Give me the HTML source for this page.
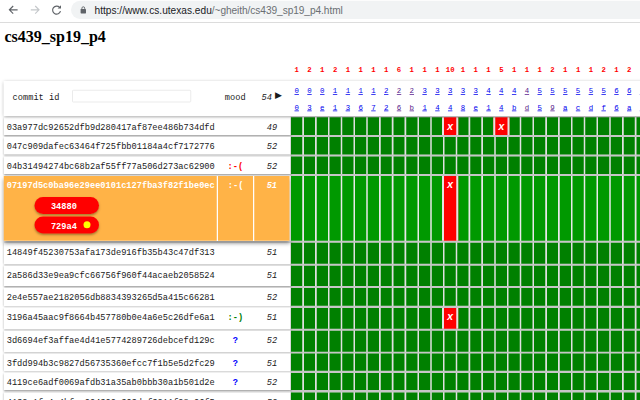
<!DOCTYPE html>
<html lang="en"><head><meta charset="utf-8"><title>cs439_sp19_p4</title>
<style>
html,body{margin:0;padding:0;background:#fff;}
body{width:640px;height:400px;overflow:hidden;position:relative;}
.s{position:absolute;left:0;top:0;width:2560px;height:1600px;transform:scale(.25);transform-origin:0 0;}
.z{position:relative;width:2560px;height:1600px;overflow:hidden;background:#fff;font-family:"Liberation Mono",monospace;font-size:34.68px;color:#1a1a1a;}

.bar{position:absolute;left:0;top:0;width:2560px;height:88px;background:#fff;border-bottom:4px solid #dcdcdc;}
.pill{position:absolute;left:284px;top:2.8px;width:2400px;height:72.8px;border-radius:36.4px;background:#f1f3f4;}
.url{position:absolute;left:378px;top:20px;font-family:"Liberation Sans",Arial,sans-serif;font-size:40.6px;line-height:44px;color:#202124;white-space:nowrap;}
.url span{color:#6b6f73;letter-spacing:-0.28px;}
.ico{position:absolute;top:0;left:0;}
h1{color:#000;position:absolute;left:18px;top:112px;margin:0;font-family:"Liberation Serif","Times New Roman",serif;font-weight:bold;font-size:64px;line-height:72px;white-space:nowrap;}
.red{position:absolute;top:264px;width:80px;margin-left:-40px;text-align:center;color:#f00;font-weight:bold;font-size:29.2px;line-height:32px;font-family:"Liberation Mono",monospace;}
.head{position:absolute;left:14.4px;top:323.6px;width:2640px;height:139.6px;background:#fff;box-shadow:0 5.2px 14px rgba(0,0,0,.42);z-index:3;}
.head .lab{position:absolute;top:45.6px;line-height:40px;}
.head input{position:absolute;left:274.4px;top:36.8px;width:475.2px;height:48.8px;box-sizing:border-box;border:2.8px solid #d6d6d6;border-radius:4px;-webkit-appearance:none;appearance:none;outline:none;padding:0;margin:0;background:#fff;}
.head a{position:absolute;width:48px;margin-left:-24px;text-align:center;font-size:29.6px;line-height:36px;color:#0000ee;text-decoration:underline;text-decoration-thickness:3px;text-underline-offset:2.8px;}
.head a.v{color:#551a8b;}
.head a.a{top:23.6px;}
.head a.b{top:89.6px;}
.row{position:absolute;left:14.8px;width:2640px;}
.row .left{position:absolute;left:0;top:0;width:1146.8px;height:100%;background:#fff;box-shadow:0 2.8px 8px rgba(0,0,0,.45);}
.row .c{position:absolute;top:0;height:100%;box-sizing:border-box;padding-top:20.4px;line-height:40px;white-space:nowrap;}
.row .id{left:0;width:854.4px;padding-left:12px;}
.row .mood{left:854.4px;width:144.8px;text-align:center;font-weight:bold;}
.row .score{left:999.2px;width:147.6px;text-align:center;font-style:italic;}
.gridbg{position:absolute;left:1162.4px;top:466px;width:1440px;height:1200px;background:#c6c6c6;}
.row .g{position:absolute;left:1147.6px;top:0;width:1440px;height:100%;background:#e0e0e0;}
.row .t{position:absolute;top:0;height:100%;width:44.8px;background:#008000;color:#fff;text-align:center;font-weight:bold;font-style:italic;font-size:41.6px;line-height:40px;box-sizing:border-box;padding-top:18.4px;}
.row .t.f{background:#ff0000;width:64.8px;margin-left:-10px;border-left:8px solid #e4e4e4;border-right:8px solid #e4e4e4;z-index:1;}
.bad{color:#f00;}
.good{color:#008000;}
.unk{color:#00f;}
.row.hl{z-index:2;}
.row.hl .left{box-shadow:0 10px 16px rgba(0,0,0,.5);width:1142.8px;}
.row.hl .c{background:#ffb347;color:#fff;font-weight:bold;}
.row.hl .id{width:852.4px;}
.row.hl .mood{left:857.6px;width:140px;}
.row.hl .score{left:1002.4px;width:140.4px;}
.row.hl .t{background:#009900;}
.row.hl .g{background:#e9e9e9;}
.row.hl .t.f{background:#ff0000;}
.pillb{position:absolute;left:122.8px;width:258.4px;height:68px;border-radius:34px;background:#f00;box-shadow:0 6px 10px rgba(0,0,0,.35);color:#fff;font-weight:bold;text-align:left;box-sizing:border-box;padding-left:66px;line-height:79.2px;font-size:34.68px;}
.dot{position:absolute;left:196.4px;top:18.4px;width:28px;height:28px;border-radius:50%;background:#ff0;}
</style></head>
<body>
<div class="s"><div class="z">
<div class="bar"><svg class="ico" style="width:280px;height:88px" viewBox="0 0 70 22" fill="none" stroke-linecap="butt" stroke-linejoin="miter"><path d="M17.6 9.8H9.6M13.2 6.0L9.4 9.8L13.2 13.6" stroke="#5f6368" stroke-width="1.15"/><path d="M30.8 9.8H38.8M35.2 6.0L39.0 9.8L35.2 13.6" stroke="#c4c7ca" stroke-width="1.15"/><path d="M59.6 7.4A4.0 4.0 0 1 0 60.5 11.2" stroke="#5f6368" stroke-width="1.15"/><path d="M61.0 5.2V8.6H57.6Z" fill="#5f6368" stroke="none"/></svg><div class="pill"></div><svg class="ico" style="left:320px;top:24px;width:28px;height:32px" viewBox="0 0 7 8"><rect x="0.6" y="3" width="5.4" height="4.4" rx="0.6" fill="#5f6368"/><path d="M1.9 3.2V2.2a1.4 1.4 0 0 1 2.8 0v1" fill="none" stroke="#5f6368" stroke-width="0.9"/></svg><div class="url">https://www.cs.utexas.edu<span>/~gheith/cs439_sp19_p4.html</span></div></div>
<h1>cs439_sp19_p4</h1>
<div class="red" style="left:1186.8px">1</div><div class="red" style="left:1237.96px">2</div><div class="red" style="left:1289.12px">1</div><div class="red" style="left:1340.28px">2</div><div class="red" style="left:1391.44px">1</div><div class="red" style="left:1442.6px">1</div><div class="red" style="left:1493.76px">1</div><div class="red" style="left:1544.92px">1</div><div class="red" style="left:1596.08px">6</div><div class="red" style="left:1647.24px">1</div><div class="red" style="left:1698.4px">1</div><div class="red" style="left:1749.56px">1</div><div class="red" style="left:1800.72px">10</div><div class="red" style="left:1851.88px">1</div><div class="red" style="left:1903.04px">1</div><div class="red" style="left:1954.2px">1</div><div class="red" style="left:2005.36px">5</div><div class="red" style="left:2056.52px">1</div><div class="red" style="left:2107.68px">1</div><div class="red" style="left:2158.84px">1</div><div class="red" style="left:2210px">2</div><div class="red" style="left:2261.16px">1</div><div class="red" style="left:2312.32px">1</div><div class="red" style="left:2363.48px">1</div><div class="red" style="left:2414.64px">2</div><div class="red" style="left:2465.8px">1</div><div class="red" style="left:2516.96px">2</div>
<div class="head"><span class="lab" style="left:36px">commit id</span><input type="text" aria-label="commit id"><span class="lab" style="left:884.8px">mood</span><span class="lab" style="left:1032px;font-style:italic">54</span><span class="lab" style="left:1086px;top:36.8px;font-family:'DejaVu Sans',sans-serif;font-size:36px">&#9654;</span><a class="a" style="left:1172.4px">0</a><a class="b" style="left:1172.4px">0</a><a class="a" style="left:1223.56px">0</a><a class="b" style="left:1223.56px">3</a><a class="a" style="left:1274.72px">0</a><a class="b" style="left:1274.72px">e</a><a class="a" style="left:1325.88px">1</a><a class="b" style="left:1325.88px">1</a><a class="a" style="left:1377.04px">1</a><a class="b" style="left:1377.04px">3</a><a class="a" style="left:1428.2px">1</a><a class="b" style="left:1428.2px">6</a><a class="a" style="left:1479.36px">1</a><a class="b" style="left:1479.36px">7</a><a class="a" style="left:1530.52px">2</a><a class="b" style="left:1530.52px">2</a><a class="a v" style="left:1581.68px">2</a><a class="b v" style="left:1581.68px">6</a><a class="a v" style="left:1632.84px">2</a><a class="b v" style="left:1632.84px">b</a><a class="a" style="left:1684px">3</a><a class="b" style="left:1684px">1</a><a class="a" style="left:1735.16px">3</a><a class="b" style="left:1735.16px">4</a><a class="a" style="left:1786.32px">3</a><a class="b" style="left:1786.32px">4</a><a class="a" style="left:1837.48px">3</a><a class="b" style="left:1837.48px">8</a><a class="a" style="left:1888.64px">3</a><a class="b" style="left:1888.64px">e</a><a class="a" style="left:1939.8px">4</a><a class="b" style="left:1939.8px">1</a><a class="a" style="left:1990.96px">4</a><a class="b" style="left:1990.96px">4</a><a class="a" style="left:2042.12px">4</a><a class="b" style="left:2042.12px">b</a><a class="a v" style="left:2093.28px">4</a><a class="b v" style="left:2093.28px">d</a><a class="a" style="left:2144.44px">5</a><a class="b" style="left:2144.44px">5</a><a class="a" style="left:2195.6px">5</a><a class="b v" style="left:2195.6px">9</a><a class="a" style="left:2246.76px">5</a><a class="b" style="left:2246.76px">a</a><a class="a" style="left:2297.92px">5</a><a class="b" style="left:2297.92px">c</a><a class="a" style="left:2349.08px">5</a><a class="b" style="left:2349.08px">d</a><a class="a" style="left:2400.24px">5</a><a class="b" style="left:2400.24px">f</a><a class="a" style="left:2451.4px">6</a><a class="b" style="left:2451.4px">6</a><a class="a" style="left:2502.56px">6</a><a class="b" style="left:2502.56px">a</a><a class="a" style="left:2553.72px">6</a><a class="b" style="left:2553.72px">7</a></div>
<div class="gridbg"></div>
<div class="row" style="top:468.8px;height:71.2px"><div class="left"><div class="c id">03a977dc92652dfb9d280417af87ee486b734dfd</div><div class="c mood "></div><div class="c score">49</div></div><div class="g"></div><div class="t" style="left:1149.6px"></div><div class="t" style="left:1200.76px"></div><div class="t" style="left:1251.92px"></div><div class="t" style="left:1303.08px"></div><div class="t" style="left:1354.24px"></div><div class="t" style="left:1405.4px"></div><div class="t" style="left:1456.56px"></div><div class="t" style="left:1507.72px"></div><div class="t" style="left:1558.88px"></div><div class="t" style="left:1610.04px"></div><div class="t" style="left:1661.2px"></div><div class="t" style="left:1712.36px"></div><div class="t f" style="left:1763.52px">x</div><div class="t" style="left:1814.68px"></div><div class="t" style="left:1865.84px"></div><div class="t" style="left:1917px"></div><div class="t f" style="left:1968.16px">x</div><div class="t" style="left:2019.32px"></div><div class="t" style="left:2070.48px"></div><div class="t" style="left:2121.64px"></div><div class="t" style="left:2172.8px"></div><div class="t" style="left:2223.96px"></div><div class="t" style="left:2275.12px"></div><div class="t" style="left:2326.28px"></div><div class="t" style="left:2377.44px"></div><div class="t" style="left:2428.6px"></div><div class="t" style="left:2479.76px"></div><div class="t" style="left:2530.92px"></div></div>
<div class="row" style="top:548px;height:69.6px"><div class="left"><div class="c id">047c909dafec63464f725fbb01184a4cf7172776</div><div class="c mood "></div><div class="c score">52</div></div><div class="g"></div><div class="t" style="left:1149.6px"></div><div class="t" style="left:1200.76px"></div><div class="t" style="left:1251.92px"></div><div class="t" style="left:1303.08px"></div><div class="t" style="left:1354.24px"></div><div class="t" style="left:1405.4px"></div><div class="t" style="left:1456.56px"></div><div class="t" style="left:1507.72px"></div><div class="t" style="left:1558.88px"></div><div class="t" style="left:1610.04px"></div><div class="t" style="left:1661.2px"></div><div class="t" style="left:1712.36px"></div><div class="t" style="left:1763.52px"></div><div class="t" style="left:1814.68px"></div><div class="t" style="left:1865.84px"></div><div class="t" style="left:1917px"></div><div class="t" style="left:1968.16px"></div><div class="t" style="left:2019.32px"></div><div class="t" style="left:2070.48px"></div><div class="t" style="left:2121.64px"></div><div class="t" style="left:2172.8px"></div><div class="t" style="left:2223.96px"></div><div class="t" style="left:2275.12px"></div><div class="t" style="left:2326.28px"></div><div class="t" style="left:2377.44px"></div><div class="t" style="left:2428.6px"></div><div class="t" style="left:2479.76px"></div><div class="t" style="left:2530.92px"></div></div>
<div class="row" style="top:625.6px;height:70.4px"><div class="left"><div class="c id">04b31494274bc68b2af55ff77a506d273ac62900</div><div class="c mood bad">:-(</div><div class="c score">52</div></div><div class="g"></div><div class="t" style="left:1149.6px"></div><div class="t" style="left:1200.76px"></div><div class="t" style="left:1251.92px"></div><div class="t" style="left:1303.08px"></div><div class="t" style="left:1354.24px"></div><div class="t" style="left:1405.4px"></div><div class="t" style="left:1456.56px"></div><div class="t" style="left:1507.72px"></div><div class="t" style="left:1558.88px"></div><div class="t" style="left:1610.04px"></div><div class="t" style="left:1661.2px"></div><div class="t" style="left:1712.36px"></div><div class="t" style="left:1763.52px"></div><div class="t" style="left:1814.68px"></div><div class="t" style="left:1865.84px"></div><div class="t" style="left:1917px"></div><div class="t" style="left:1968.16px"></div><div class="t" style="left:2019.32px"></div><div class="t" style="left:2070.48px"></div><div class="t" style="left:2121.64px"></div><div class="t" style="left:2172.8px"></div><div class="t" style="left:2223.96px"></div><div class="t" style="left:2275.12px"></div><div class="t" style="left:2326.28px"></div><div class="t" style="left:2377.44px"></div><div class="t" style="left:2428.6px"></div><div class="t" style="left:2479.76px"></div><div class="t" style="left:2530.92px"></div></div>
<div class="row hl" style="top:704px;height:259.2px"><div class="left"><div class="c id">07197d5c0ba96e29ee0101c127fba3f82f1be0ec<div class="pillb" style="top:84px">34880</div><div class="pillb" style="top:162.4px">729a4<span class="dot"></span></div></div><div class="c mood ">:-(</div><div class="c score">51</div></div><div class="g"></div><div class="t" style="left:1149.6px"></div><div class="t" style="left:1200.76px"></div><div class="t" style="left:1251.92px"></div><div class="t" style="left:1303.08px"></div><div class="t" style="left:1354.24px"></div><div class="t" style="left:1405.4px"></div><div class="t" style="left:1456.56px"></div><div class="t" style="left:1507.72px"></div><div class="t" style="left:1558.88px"></div><div class="t" style="left:1610.04px"></div><div class="t" style="left:1661.2px"></div><div class="t" style="left:1712.36px"></div><div class="t f" style="left:1763.52px">x</div><div class="t" style="left:1814.68px"></div><div class="t" style="left:1865.84px"></div><div class="t" style="left:1917px"></div><div class="t" style="left:1968.16px"></div><div class="t" style="left:2019.32px"></div><div class="t" style="left:2070.48px"></div><div class="t" style="left:2121.64px"></div><div class="t" style="left:2172.8px"></div><div class="t" style="left:2223.96px"></div><div class="t" style="left:2275.12px"></div><div class="t" style="left:2326.28px"></div><div class="t" style="left:2377.44px"></div><div class="t" style="left:2428.6px"></div><div class="t" style="left:2479.76px"></div><div class="t" style="left:2530.92px"></div></div>
<div class="row" style="top:971.2px;height:84px"><div class="left"><div class="c id">14849f45230753afa173de916fb35b43c47df313</div><div class="c mood "></div><div class="c score">51</div></div><div class="g"></div><div class="t" style="left:1149.6px"></div><div class="t" style="left:1200.76px"></div><div class="t" style="left:1251.92px"></div><div class="t" style="left:1303.08px"></div><div class="t" style="left:1354.24px"></div><div class="t" style="left:1405.4px"></div><div class="t" style="left:1456.56px"></div><div class="t" style="left:1507.72px"></div><div class="t" style="left:1558.88px"></div><div class="t" style="left:1610.04px"></div><div class="t" style="left:1661.2px"></div><div class="t" style="left:1712.36px"></div><div class="t" style="left:1763.52px"></div><div class="t" style="left:1814.68px"></div><div class="t" style="left:1865.84px"></div><div class="t" style="left:1917px"></div><div class="t" style="left:1968.16px"></div><div class="t" style="left:2019.32px"></div><div class="t" style="left:2070.48px"></div><div class="t" style="left:2121.64px"></div><div class="t" style="left:2172.8px"></div><div class="t" style="left:2223.96px"></div><div class="t" style="left:2275.12px"></div><div class="t" style="left:2326.28px"></div><div class="t" style="left:2377.44px"></div><div class="t" style="left:2428.6px"></div><div class="t" style="left:2479.76px"></div><div class="t" style="left:2530.92px"></div></div>
<div class="row" style="top:1063.2px;height:80.8px"><div class="left"><div class="c id">2a586d33e9ea9cfc66756f960f44acaeb2058524</div><div class="c mood "></div><div class="c score">51</div></div><div class="g"></div><div class="t" style="left:1149.6px"></div><div class="t" style="left:1200.76px"></div><div class="t" style="left:1251.92px"></div><div class="t" style="left:1303.08px"></div><div class="t" style="left:1354.24px"></div><div class="t" style="left:1405.4px"></div><div class="t" style="left:1456.56px"></div><div class="t" style="left:1507.72px"></div><div class="t" style="left:1558.88px"></div><div class="t" style="left:1610.04px"></div><div class="t" style="left:1661.2px"></div><div class="t" style="left:1712.36px"></div><div class="t" style="left:1763.52px"></div><div class="t" style="left:1814.68px"></div><div class="t" style="left:1865.84px"></div><div class="t" style="left:1917px"></div><div class="t" style="left:1968.16px"></div><div class="t" style="left:2019.32px"></div><div class="t" style="left:2070.48px"></div><div class="t" style="left:2121.64px"></div><div class="t" style="left:2172.8px"></div><div class="t" style="left:2223.96px"></div><div class="t" style="left:2275.12px"></div><div class="t" style="left:2326.28px"></div><div class="t" style="left:2377.44px"></div><div class="t" style="left:2428.6px"></div><div class="t" style="left:2479.76px"></div><div class="t" style="left:2530.92px"></div></div>
<div class="row" style="top:1152px;height:71.2px"><div class="left"><div class="c id">2e4e557ae2182056db8834393265d5a415c66281</div><div class="c mood "></div><div class="c score">52</div></div><div class="g"></div><div class="t" style="left:1149.6px"></div><div class="t" style="left:1200.76px"></div><div class="t" style="left:1251.92px"></div><div class="t" style="left:1303.08px"></div><div class="t" style="left:1354.24px"></div><div class="t" style="left:1405.4px"></div><div class="t" style="left:1456.56px"></div><div class="t" style="left:1507.72px"></div><div class="t" style="left:1558.88px"></div><div class="t" style="left:1610.04px"></div><div class="t" style="left:1661.2px"></div><div class="t" style="left:1712.36px"></div><div class="t" style="left:1763.52px"></div><div class="t" style="left:1814.68px"></div><div class="t" style="left:1865.84px"></div><div class="t" style="left:1917px"></div><div class="t" style="left:1968.16px"></div><div class="t" style="left:2019.32px"></div><div class="t" style="left:2070.48px"></div><div class="t" style="left:2121.64px"></div><div class="t" style="left:2172.8px"></div><div class="t" style="left:2223.96px"></div><div class="t" style="left:2275.12px"></div><div class="t" style="left:2326.28px"></div><div class="t" style="left:2377.44px"></div><div class="t" style="left:2428.6px"></div><div class="t" style="left:2479.76px"></div><div class="t" style="left:2530.92px"></div></div>
<div class="row" style="top:1232px;height:83.2px"><div class="left"><div class="c id">3196a45aac9f8664b457780b0e4a6e5c26dfe6a1</div><div class="c mood good">:-)</div><div class="c score">51</div></div><div class="g"></div><div class="t" style="left:1149.6px"></div><div class="t" style="left:1200.76px"></div><div class="t" style="left:1251.92px"></div><div class="t" style="left:1303.08px"></div><div class="t" style="left:1354.24px"></div><div class="t" style="left:1405.4px"></div><div class="t" style="left:1456.56px"></div><div class="t" style="left:1507.72px"></div><div class="t" style="left:1558.88px"></div><div class="t" style="left:1610.04px"></div><div class="t" style="left:1661.2px"></div><div class="t" style="left:1712.36px"></div><div class="t f" style="left:1763.52px">x</div><div class="t" style="left:1814.68px"></div><div class="t" style="left:1865.84px"></div><div class="t" style="left:1917px"></div><div class="t" style="left:1968.16px"></div><div class="t" style="left:2019.32px"></div><div class="t" style="left:2070.48px"></div><div class="t" style="left:2121.64px"></div><div class="t" style="left:2172.8px"></div><div class="t" style="left:2223.96px"></div><div class="t" style="left:2275.12px"></div><div class="t" style="left:2326.28px"></div><div class="t" style="left:2377.44px"></div><div class="t" style="left:2428.6px"></div><div class="t" style="left:2479.76px"></div><div class="t" style="left:2530.92px"></div></div>
<div class="row" style="top:1323.2px;height:84px"><div class="left"><div class="c id">3d6694ef3affae4d41e5774289726debcefd129c</div><div class="c mood unk">?</div><div class="c score">52</div></div><div class="g"></div><div class="t" style="left:1149.6px"></div><div class="t" style="left:1200.76px"></div><div class="t" style="left:1251.92px"></div><div class="t" style="left:1303.08px"></div><div class="t" style="left:1354.24px"></div><div class="t" style="left:1405.4px"></div><div class="t" style="left:1456.56px"></div><div class="t" style="left:1507.72px"></div><div class="t" style="left:1558.88px"></div><div class="t" style="left:1610.04px"></div><div class="t" style="left:1661.2px"></div><div class="t" style="left:1712.36px"></div><div class="t" style="left:1763.52px"></div><div class="t" style="left:1814.68px"></div><div class="t" style="left:1865.84px"></div><div class="t" style="left:1917px"></div><div class="t" style="left:1968.16px"></div><div class="t" style="left:2019.32px"></div><div class="t" style="left:2070.48px"></div><div class="t" style="left:2121.64px"></div><div class="t" style="left:2172.8px"></div><div class="t" style="left:2223.96px"></div><div class="t" style="left:2275.12px"></div><div class="t" style="left:2326.28px"></div><div class="t" style="left:2377.44px"></div><div class="t" style="left:2428.6px"></div><div class="t" style="left:2479.76px"></div><div class="t" style="left:2530.92px"></div></div>
<div class="row" style="top:1414px;height:69.2px"><div class="left"><div class="c id">3fdd994b3c9827d56735360efcc7f1b5e5d2fc29</div><div class="c mood unk">?</div><div class="c score">51</div></div><div class="g"></div><div class="t" style="left:1149.6px"></div><div class="t" style="left:1200.76px"></div><div class="t" style="left:1251.92px"></div><div class="t" style="left:1303.08px"></div><div class="t" style="left:1354.24px"></div><div class="t" style="left:1405.4px"></div><div class="t" style="left:1456.56px"></div><div class="t" style="left:1507.72px"></div><div class="t" style="left:1558.88px"></div><div class="t" style="left:1610.04px"></div><div class="t" style="left:1661.2px"></div><div class="t" style="left:1712.36px"></div><div class="t" style="left:1763.52px"></div><div class="t" style="left:1814.68px"></div><div class="t" style="left:1865.84px"></div><div class="t" style="left:1917px"></div><div class="t" style="left:1968.16px"></div><div class="t" style="left:2019.32px"></div><div class="t" style="left:2070.48px"></div><div class="t" style="left:2121.64px"></div><div class="t" style="left:2172.8px"></div><div class="t" style="left:2223.96px"></div><div class="t" style="left:2275.12px"></div><div class="t" style="left:2326.28px"></div><div class="t" style="left:2377.44px"></div><div class="t" style="left:2428.6px"></div><div class="t" style="left:2479.76px"></div><div class="t" style="left:2530.92px"></div></div>
<div class="row" style="top:1492px;height:68.4px"><div class="left"><div class="c id">4119ce6adf0069afdb31a35ab0bbb30a1b501d2e</div><div class="c mood unk">?</div><div class="c score">52</div></div><div class="g"></div><div class="t" style="left:1149.6px"></div><div class="t" style="left:1200.76px"></div><div class="t" style="left:1251.92px"></div><div class="t" style="left:1303.08px"></div><div class="t" style="left:1354.24px"></div><div class="t" style="left:1405.4px"></div><div class="t" style="left:1456.56px"></div><div class="t" style="left:1507.72px"></div><div class="t" style="left:1558.88px"></div><div class="t" style="left:1610.04px"></div><div class="t" style="left:1661.2px"></div><div class="t" style="left:1712.36px"></div><div class="t" style="left:1763.52px"></div><div class="t" style="left:1814.68px"></div><div class="t" style="left:1865.84px"></div><div class="t" style="left:1917px"></div><div class="t" style="left:1968.16px"></div><div class="t" style="left:2019.32px"></div><div class="t" style="left:2070.48px"></div><div class="t" style="left:2121.64px"></div><div class="t" style="left:2172.8px"></div><div class="t" style="left:2223.96px"></div><div class="t" style="left:2275.12px"></div><div class="t" style="left:2326.28px"></div><div class="t" style="left:2377.44px"></div><div class="t" style="left:2428.6px"></div><div class="t" style="left:2479.76px"></div><div class="t" style="left:2530.92px"></div></div>
<div class="row" style="top:1569.6px;height:80px"><div class="left"><div class="c id">4132c1fe4a4bfcc004300e363dcf3211f98e06f5</div><div class="c mood "></div><div class="c score">50</div></div><div class="g"></div><div class="t" style="left:1149.6px"></div><div class="t" style="left:1200.76px"></div><div class="t" style="left:1251.92px"></div><div class="t" style="left:1303.08px"></div><div class="t" style="left:1354.24px"></div><div class="t" style="left:1405.4px"></div><div class="t" style="left:1456.56px"></div><div class="t" style="left:1507.72px"></div><div class="t" style="left:1558.88px"></div><div class="t" style="left:1610.04px"></div><div class="t" style="left:1661.2px"></div><div class="t" style="left:1712.36px"></div><div class="t" style="left:1763.52px"></div><div class="t" style="left:1814.68px"></div><div class="t" style="left:1865.84px"></div><div class="t" style="left:1917px"></div><div class="t" style="left:1968.16px"></div><div class="t" style="left:2019.32px"></div><div class="t" style="left:2070.48px"></div><div class="t" style="left:2121.64px"></div><div class="t" style="left:2172.8px"></div><div class="t" style="left:2223.96px"></div><div class="t" style="left:2275.12px"></div><div class="t" style="left:2326.28px"></div><div class="t" style="left:2377.44px"></div><div class="t" style="left:2428.6px"></div><div class="t" style="left:2479.76px"></div><div class="t" style="left:2530.92px"></div></div>
</div></div>
</body></html>
